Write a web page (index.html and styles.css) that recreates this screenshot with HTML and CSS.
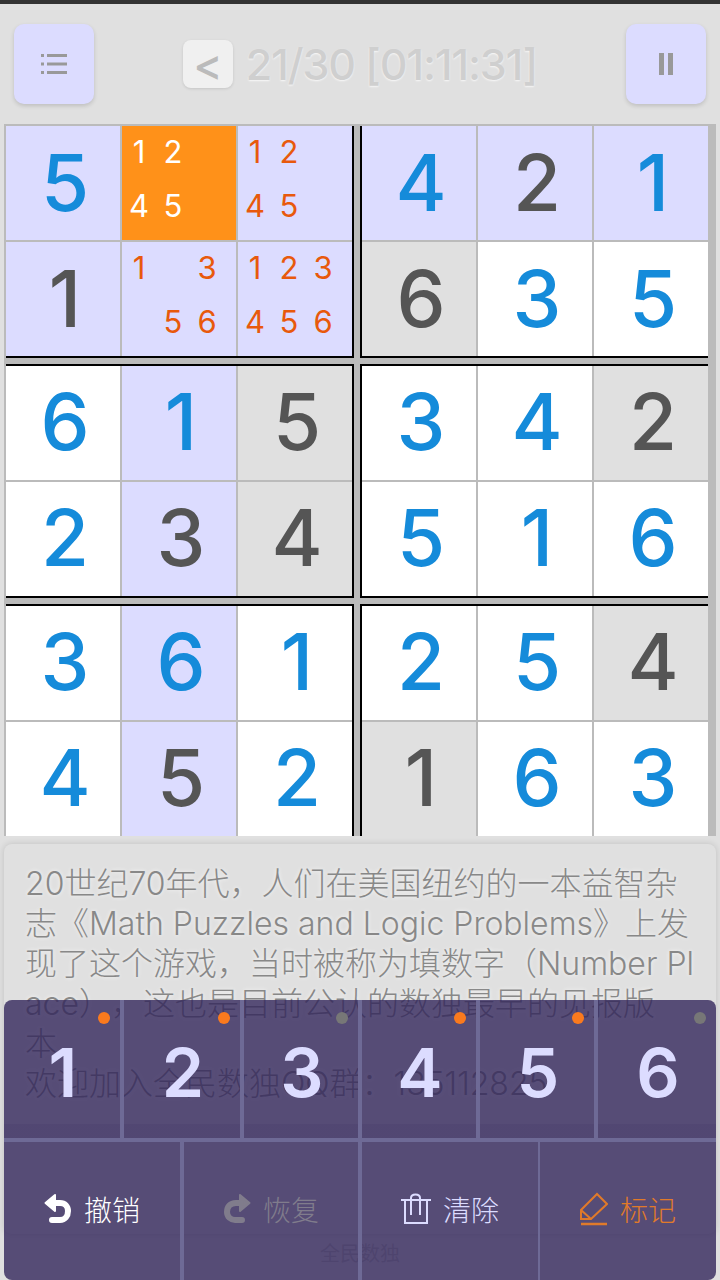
FILE: index.html
```html
<!DOCTYPE html>
<html lang="zh">
<head>
    <meta charset="UTF-8">
    <meta name="viewport" content="width=device-width, initial-scale=1.0">
    <title>全民数独</title>
    <link rel="stylesheet" href="styles.css">
</head>
<body>
    <div class="statusbar"></div>

    <header class="toolbar">
        <button class="tool-btn" type="button">
            <svg width="28" height="24" viewBox="0 0 28 24">
                <path d="M1 2h3v3H1zM1 10.500h3v3H1zM1 19h3v3H1z" fill="#999"/>
                <path d="M7 2h20v3H7zM7 10.500h20v3H7zM7 19h20v3H7z" fill="#999"/>
            </svg>
        </button>
        <div class="title">
            <span class="prev-btn">&lt;</span>
            <span class="progress">21/30 [01:11:31]</span>
        </div>
        <button class="tool-btn" type="button">
            <svg width="16" height="22" viewBox="0 0 16 22">
                <path d="M1 0h5v22H1zM10 0h5v22h-5z" fill="#999"/>
            </svg>
        </button>
    </header>

    <main class="board">
        <section class="box box-top box-left">
            <div class="cell hl num">5</div>
            <div class="cell selected notes"><span>1</span><span>2</span><span></span><span>4</span><span>5</span></div>
            <div class="cell hl notes"><span>1</span><span>2</span><span></span><span>4</span><span>5</span></div>
            <div class="cell hl fixed">1</div>
            <div class="cell hl notes"><span>1</span><span></span><span>3</span><span></span><span>5</span><span>6</span></div>
            <div class="cell hl notes"><span>1</span><span>2</span><span>3</span><span>4</span><span>5</span><span>6</span></div>
        </section>
        <section class="box box-top box-right">
            <div class="cell hl num">4</div>
            <div class="cell hl fixed">2</div>
            <div class="cell hl num">1</div>
            <div class="cell gray fixed">6</div>
            <div class="cell num">3</div>
            <div class="cell num">5</div>
        </section>
        <section class="box box-mid box-left">
            <div class="cell num">6</div>
            <div class="cell hl num">1</div>
            <div class="cell gray fixed">5</div>
            <div class="cell num">2</div>
            <div class="cell hl fixed">3</div>
            <div class="cell gray fixed">4</div>
        </section>
        <section class="box box-mid box-right">
            <div class="cell num">3</div>
            <div class="cell num">4</div>
            <div class="cell gray fixed">2</div>
            <div class="cell num">5</div>
            <div class="cell num">1</div>
            <div class="cell num">6</div>
        </section>
        <section class="box box-bottom box-left">
            <div class="cell num">3</div>
            <div class="cell hl num">6</div>
            <div class="cell num">1</div>
            <div class="cell num">4</div>
            <div class="cell hl fixed">5</div>
            <div class="cell num">2</div>
        </section>
        <section class="box box-bottom box-right">
            <div class="cell num">2</div>
            <div class="cell num">5</div>
            <div class="cell gray fixed">4</div>
            <div class="cell gray fixed">1</div>
            <div class="cell num">6</div>
            <div class="cell num">3</div>
        </section>
    </main>

    <section class="info">
        20世纪70年代，人们在美国纽约的一本益智杂志《Math Puzzles and Logic Problems》上发现了这个游戏，当时被称为填数字（Number Place），这也是目前公认的数独最早的见报版<br>本<br>
        欢迎加入全民数独QQ群：135112825
    </section>

    <footer class="footer">全民数独</footer>

    <div class="keypad">
        <div class="digits">
            <button class="digit" type="button">1<i class="dot"></i></button>
            <button class="digit" type="button">2<i class="dot"></i></button>
            <button class="digit" type="button">3<i class="dot off"></i></button>
            <button class="digit" type="button">4<i class="dot"></i></button>
            <button class="digit" type="button">5<i class="dot"></i></button>
            <button class="digit" type="button">6<i class="dot off"></i></button>
        </div>
        <div class="actions">
            <button class="action undo" type="button">
                <svg width="28" height="32" viewBox="0 0 28 32">
                    <path d="M1.500 10L11 2V18Z" fill="currentColor" stroke="currentColor" stroke-width="2" stroke-linejoin="round"/>
                    <path d="M10 10H16C21 10 24 13.500 24 18C24 23 21 27 16 27H8" fill="none" stroke="currentColor" stroke-width="6" stroke-linecap="round"/>
                </svg>
                撤销
            </button>
            <button class="action redo" type="button">
                <svg width="28" height="32" viewBox="0 0 28 32">
                    <path d="M26.500 10L17 2V18Z" fill="currentColor" stroke="currentColor" stroke-width="2" stroke-linejoin="round"/>
                    <path d="M18 10H13C7 10 4 14 4 19C4 24 8 27 12 27H19" fill="none" stroke="currentColor" stroke-width="6" stroke-linecap="round"/>
                </svg>
                恢复
            </button>
            <button class="action clear" type="button">
                <svg width="30" height="32" viewBox="0 0 30 32">
                    <path d="M0 7H30M4 7V30H26V7M10 22V5C10 2.500 12 1.500 14.500 1.500C17 1.500 19 2.500 19 5V22" fill="none" stroke="currentColor" stroke-width="2"/>
                </svg>
                清除
            </button>
            <button class="action mark" type="button">
                <svg width="28" height="34" viewBox="0 0 28 34">
                    <path d="M1 18L17 2L27 12L11 27H1ZM1 18L11 27" fill="none" stroke="currentColor" stroke-width="2"/>
                    <path d="M1 32H27" fill="none" stroke="currentColor" stroke-width="2.500"/>
                </svg>
                标记
            </button>
        </div>
    </div>
</body>
</html>
```

FILE: styles.css
```css
html, body {
    height: 1280px;
    overflow: hidden;
}

body {
    margin: 0;
    position: relative;
    background-color: #e0e0e0;
    font-family: Inter, "Noto Sans CJK SC", sans-serif;
}

button {
    border: none;
    padding: 0;
    font-family: inherit;
    cursor: pointer;
}

.statusbar {
    height: 4px;
    background-color: #333;
}

/* top bar */
.toolbar {
    height: 120px;
    box-sizing: border-box;
    padding: 20px 14px;
    display: flex;
    align-items: center;
    justify-content: space-between;
}

.tool-btn {
    width: 80px;
    height: 80px;
    border-radius: 10px;
    background-color: #dcdcff;
    box-shadow: 0 2px 4px rgba(0, 0, 0, 0.15);
    display: flex;
    align-items: center;
    justify-content: center;
}

.title {
    display: flex;
    align-items: center;
    gap: 13px;
}

.prev-btn {
    width: 50px;
    height: 48px;
    border-radius: 8px;
    background-color: #f0f0f0;
    box-shadow: 0 1px 3px rgba(0, 0, 0, 0.12);
    color: #bbb;
    font-size: 44px;
    font-weight: 500;
    display: flex;
    align-items: center;
    justify-content: center;
}

.progress {
    font-size: 43px;
    font-weight: 500;
    letter-spacing: -1.2px;
    color: #cfcfcf;
    text-shadow: 0 1px 2px rgba(255, 255, 255, 0.8);
    white-space: nowrap;
}

/* sudoku board */
.board {
    width: 712px;
    height: 712px;
    box-sizing: border-box;
    margin-left: 4px;
    padding: 2px 8px 0 2px;
    background-color: #bbb;
    overflow: hidden;
    display: grid;
    grid-template-columns: 348px 348px;
    grid-template-rows: 232px 234px 232px;
    gap: 6px;
}

.box {
    display: grid;
    grid-template-columns: repeat(3, 114px);
    grid-template-rows: repeat(2, 114px);
    gap: 2px;
    border: 0 solid #000;
}

.box-left { border-right-width: 2px; }
.box-right { border-left-width: 2px; }
.box-top { border-bottom-width: 2px; }
.box-mid { border-top-width: 2px; border-bottom-width: 2px; }
.box-bottom { border-top-width: 2px; }

.cell {
    box-sizing: border-box;
    padding-left: 4px;
    background-color: #fff;
    font-size: 78px;
    font-weight: 500;
    line-height: 1;
    display: flex;
    align-items: center;
    justify-content: center;
}

.box-mid .cell, .box-bottom .cell { padding-bottom: 3px; }

.cell.hl { background-color: #dcdcff; }
.cell.gray { background-color: #e0e0e0; }
.cell.selected { background-color: #ff9119; color: #fff; }

.num { color: #158bda; }
.fixed { color: #555; }

.cell.notes {
    padding-left: 0;
    display: grid;
    grid-template-columns: repeat(3, 34px);
    grid-template-rows: repeat(2, 52px);
    gap: 2px 0;
    justify-content: start;
    align-content: start;
    font-size: 31px;
    font-weight: 400;
    color: #e8590c;
}

.notes span {
    text-align: center;
    line-height: 52px;
}

.cell.selected.notes { color: #fff; }

/* text under the board */
.info {
    margin: 8px 4px 0;
    height: 390px;
    box-sizing: border-box;
    padding: 20px 21px 0;
    border-radius: 8px;
    background-color: #e0e0e0;
    box-shadow: 0 0 6px rgba(0, 0, 0, 0.15);
    font-size: 32px;
    font-weight: 300;
    line-height: 40px;
    color: #888;
    text-shadow: 0 0 4px rgba(255, 255, 255, 0.8);
    word-break: break-all;
    text-spacing-trim: space-all;
}

.footer {
    margin-top: 6px;
    text-align: center;
    font-size: 20px;
    line-height: 28px;
    color: #bbb;
}

/* number pad lies over the text */
.keypad {
    position: absolute;
    left: 4px;
    top: 1000px;
    width: 712px;
    height: 280px;
    border-radius: 8px;
    background-color: rgba(48, 35, 88, 0.78);
    display: flex;
    flex-direction: column;
    overflow: hidden;
}

.digits {
    height: 142px;
    box-sizing: border-box;
    border-bottom: 4px solid #6e6a96;
    background: linear-gradient(to bottom, transparent 124px, rgba(48, 35, 88, 0.12) 124px);
    display: grid;
    grid-template-columns: 120px 120px 118px 118px 118px 118px;
}

.digit {
    position: relative;
    box-sizing: border-box;
    background: none;
    border-right: 4px solid #6e6a96;
    color: #dcdcff;
    font-size: 68px;
    font-weight: 600;
    line-height: 1;
    padding: 6px 0 0 2px;
}

.digit:last-child { border-right: none; }

.dot {
    position: absolute;
    top: 12px;
    right: 10px;
    width: 12px;
    height: 12px;
    border-radius: 50%;
    background-color: #fa7a1e;
}

.dot.off { background-color: #777; }

.actions {
    flex: 1;
    display: grid;
    grid-template-columns: 180px 178px 178px 176px;
}

.action {
    box-sizing: border-box;
    padding-bottom: 4px;
    background: none;
    border-right: 4px solid #6e6a96;
    font-size: 28px;
    font-weight: 300;
    display: flex;
    align-items: center;
    justify-content: center;
    gap: 12px;
}

.mark { border-right: none; }
.clear { border-right-width: 2px; }

.undo { color: #fff; }
.redo { color: #807c8c; }
.clear { color: #dcdcff; }
.mark { color: #e07a2a; }
```
